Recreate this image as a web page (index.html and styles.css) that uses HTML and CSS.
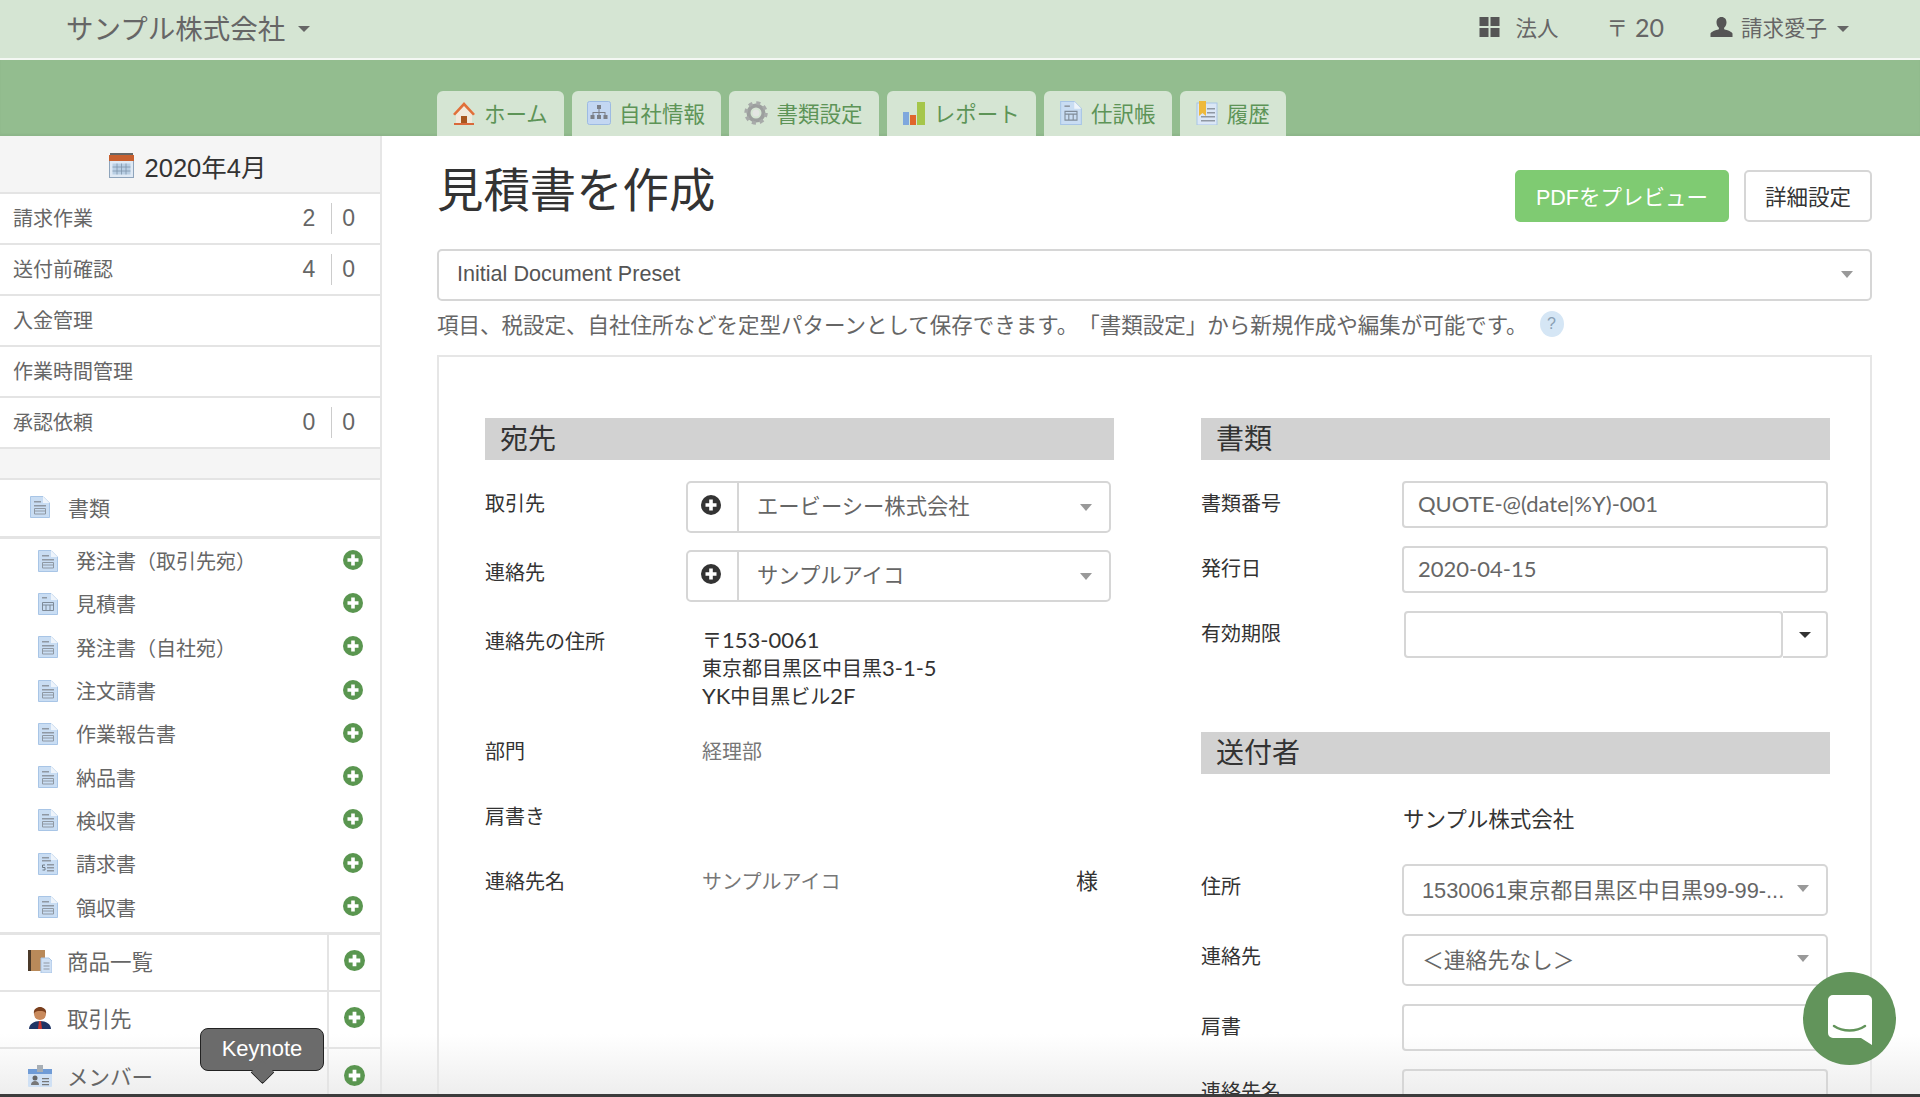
FILE: index.html
```html
<!DOCTYPE html>
<html lang="ja">
<head>
    <meta charset="UTF-8">
    <meta name="viewport" content="width=device-width, initial-scale=1.0">
    <title>見積書を作成</title>
    <link rel="stylesheet" href="styles.css">
</head>
<body>

    <svg class="sprites" width="0" height="0">
        <symbol id="i-doc" viewBox="0 0 20 22">
            <path d="M.5.500h12.500l6.500 6.500v14.500H.5z" fill="#c9ddf3" stroke="#a8c5e6"/>
            <path d="M13 .5v6.500h6.500z" fill="#eef4fb"/>
            <path d="M4 5h7v1.500H4zM4 9h12v1.500H4z" fill="#8f98a3"/>
            <path d="M4.500 12.500h11v5.500h-11zM4.500 15h11" fill="none" stroke="#8f98a3"/>
        </symbol>
        <symbol id="i-doc-table" viewBox="0 0 20 22">
            <path d="M.5.500h12.500l6.500 6.500v14.500H.5z" fill="#c9ddf3" stroke="#a8c5e6"/>
            <path d="M13 .5v6.500h6.500z" fill="#eef4fb"/>
            <path d="M4 4h5v1.500H4z" fill="#8f98a3"/>
            <path d="M4.500 9.500h11v8h-11zM4.500 12h11M8 12v5.500M12 12v5.500" fill="none" stroke="#7f8b98"/>
        </symbol>
        <symbol id="i-doc-bill" viewBox="0 0 20 22">
            <path d="M.5.500h12.500l6.500 6.500v14.500H.5z" fill="#c9ddf3" stroke="#a8c5e6"/>
            <path d="M13 .5v6.500h6.500z" fill="#eef4fb"/>
            <path d="M4 4h7v1.500H4zM4 7h9v1.500H4zM9 11h7v1.500H9zM9 14h7v1.500H9zM9 17h7v1.500H9z" fill="#8f98a3"/>
            <path d="M7 12H4.500v2.500H7V17H4.500" fill="none" stroke="#6f7a85"/>
        </symbol>
        <symbol id="i-plus" viewBox="0 0 20 20">
            <circle cx="10" cy="10" r="10" fill="currentColor"/>
            <path d="M8.200 4.500h3.600v3.700h3.700v3.600h-3.700v3.700H8.200v-3.700H4.500V8.200h3.700z" fill="#fff"/>
        </symbol>
    </svg>

    <div class="bottom-fade"></div>

    <header class="topbar">
        <div class="company">サンプル株式会社<span class="caret"></span></div>
        <div class="topbar-right">
            <span class="top-item">
                <svg class="grid-icon" viewBox="0 0 20 20"><path d="M0 0h9v9H0zM11 0h9v9h-9zM0 11h9v9H0zM11 11h9v9h-9z" fill="#555"/></svg>
                法人
            </span>
            <span class="top-item postal">〒<span class="postal-num">20</span></span>
            <span class="top-item user">
                <svg class="user-icon" viewBox="0 0 23 20"><path d="M11.500 0c3.200 0 5 2.300 5 5.200 0 2.400-1 4.500-2.400 5.500v1.500c3.500 1 8 2.500 8.400 4.300V20H.500v-3.500c.4-1.800 4.900-3.300 8.400-4.300v-1.500c-1.400-1-2.400-3.100-2.400-5.500 0-2.900 1.800-5.200 5-5.200z" fill="#555"/></svg>
                請求愛子<span class="caret small"></span>
            </span>
        </div>
    </header>

    <nav class="tabband">
        <a class="tab">
            <svg class="tab-icon" viewBox="0 0 24 24"><path d="M12 1 1 13h3v10h16V13h3z" fill="#f1e9dc"/><path d="M12 1 1 13l2 1.500L12 5l9 9.500 2-1.500z" fill="#e0703a"/><path d="M9 15h6v8H9z" fill="#a8561f"/><path d="M2 22h20v2H2z" fill="#d9693a"/></svg>
            ホーム
        </a>
        <a class="tab">
            <svg class="tab-icon" viewBox="0 0 24 24"><rect x=".5" y=".5" width="23" height="23" rx="2" fill="#c3d7f2" stroke="#9dbbe3"/><path d="M10 4h4v4h-4zM3.500 14h4v4h-4zM10 14h4v4h-4zM16.500 14h4v4h-4zM11.500 8h1v3h6v3h-1v-2h-5v2h-1v-2h-5v2h-1v-3h6z" fill="#7b7f87"/></svg>
            自社情報
        </a>
        <a class="tab">
            <svg class="tab-icon" viewBox="0 0 24 24"><circle cx="12" cy="12" r="7.500" fill="none" stroke="#9c9f9e" stroke-width="4"/><circle cx="12" cy="12" r="10" fill="none" stroke="#a7aaa9" stroke-width="3.500" stroke-dasharray="4 3.850"/><circle cx="12" cy="12" r="3.500" fill="#e3e5e2"/></svg>
            書類設定
        </a>
        <a class="tab">
            <svg class="tab-icon" viewBox="0 0 24 24"><path d="M1 11h6v13H1z" fill="#7fa8dd"/><path d="M8 14h6v10H8z" fill="#e0662c"/><path d="M15 1h8v23h-8z" fill="#a5c64a"/></svg>
            レポート
        </a>
        <a class="tab">
            <svg class="tab-icon" viewBox="0 0 20 22"><use href="#i-doc-table"/></svg>
            仕訳帳
        </a>
        <a class="tab">
            <svg class="tab-icon" viewBox="0 0 24 24"><rect x="2" y="2" width="20" height="22" fill="#dbe7f6" stroke="#a8c5e6"/><path d="M12 7h8v1.500h-8zM12 11h8v1.500h-8zM6 15h14v1.500H6zM6 19h14v1.500H6z" fill="#8f98a3"/><path d="M4 0h7v15l-3.500-3L4 15z" fill="#eeb93c"/></svg>
            履歴
        </a>
    </nav>

    <div class="layout">
        <aside class="sidebar">
            <div class="month">
                <svg class="month-icon" viewBox="0 0 25 25"><rect x=".5" y="2.500" width="24" height="22" fill="#dfe9f4" stroke="#8ea4bb"/><path d="M0 2h25v6H0z" fill="#c8602f"/><path d="M1 0h23v2H1z" fill="#666"/><path d="M3.500 10.500h18v11h-18z" fill="#b9cfe4"/><path d="M3.500 14h18M3.500 18h18M8 10.500v11M12.500 10.500v11M17 10.500v11" stroke="#7f95ab" stroke-width=".8"/></svg>
                2020年4月
            </div>
            <div class="work-row"><span>請求作業</span><span class="counts"><b>2</b><b>0</b></span></div>
            <div class="work-row"><span>送付前確認</span><span class="counts"><b>4</b><b>0</b></span></div>
            <div class="work-row"><span>入金管理</span></div>
            <div class="work-row"><span>作業時間管理</span></div>
            <div class="work-row"><span>承認依頼</span><span class="counts"><b>0</b><b>0</b></span></div>
            <div class="spacer"></div>
            <div class="doc-head">
                <svg class="doc-icon"><use href="#i-doc"/></svg>
                書類
            </div>
            <ul class="doc-list">
                <li><svg class="doc-icon"><use href="#i-doc"/></svg><span>発注書（取引先宛）</span><svg class="plus"><use href="#i-plus"/></svg></li>
                <li><svg class="doc-icon"><use href="#i-doc-table"/></svg><span>見積書</span><svg class="plus"><use href="#i-plus"/></svg></li>
                <li><svg class="doc-icon"><use href="#i-doc"/></svg><span>発注書（自社宛）</span><svg class="plus"><use href="#i-plus"/></svg></li>
                <li><svg class="doc-icon"><use href="#i-doc"/></svg><span>注文請書</span><svg class="plus"><use href="#i-plus"/></svg></li>
                <li><svg class="doc-icon"><use href="#i-doc"/></svg><span>作業報告書</span><svg class="plus"><use href="#i-plus"/></svg></li>
                <li><svg class="doc-icon"><use href="#i-doc"/></svg><span>納品書</span><svg class="plus"><use href="#i-plus"/></svg></li>
                <li><svg class="doc-icon"><use href="#i-doc"/></svg><span>検収書</span><svg class="plus"><use href="#i-plus"/></svg></li>
                <li><svg class="doc-icon"><use href="#i-doc-bill"/></svg><span>請求書</span><svg class="plus"><use href="#i-plus"/></svg></li>
                <li><svg class="doc-icon"><use href="#i-doc"/></svg><span>領収書</span><svg class="plus"><use href="#i-plus"/></svg></li>
            </ul>
            <div class="link-row">
                <span class="link-main">
                    <svg class="link-icon" viewBox="0 0 24 24"><path d="M0 1h17v21H0z" fill="#b98a5a"/><path d="M0 1h3v21H0z" fill="#4b3a2a"/><path d="M13 9h8l3 3v12H13z" fill="#cfe0f4" stroke="#a8c5e6"/><path d="M15.500 14h6M15.500 17h6M15.500 20h6" stroke="#8f98a3"/></svg>
                    商品一覧
                </span>
                <span class="link-add"><svg class="plus big"><use href="#i-plus"/></svg></span>
            </div>
            <div class="link-row">
                <span class="link-main">
                    <svg class="link-icon" viewBox="0 0 24 24"><path d="M1 23c0-5 5-8 11-8s11 3 11 8z" fill="#1f3566"/><path d="M11 15h2l1 8h-4z" fill="#c8352f"/><circle cx="12" cy="8" r="6" fill="#c98a5c"/><path d="M6 8c-1-5 3-7 6-7s7 2 6 7c-1-3-3-3-6-3s-5 0-6 3z" fill="#7a3f1d"/></svg>
                    取引先
                </span>
                <span class="link-add"><svg class="plus big"><use href="#i-plus"/></svg></span>
            </div>
            <div class="link-row last">
                <span class="link-main">
                    <svg class="link-icon" viewBox="0 0 24 24"><rect x="0" y="5" width="24" height="18" rx="1" fill="#cfe0f4"/><path d="M0 5h24v5H0z" fill="#6f9bd6"/><path d="M9 1h6v7H9z" fill="#a7aeb5"/><circle cx="7" cy="14" r="2.500" fill="#666"/><path d="M3 21c0-3 2-4 4-4s4 1 4 4zM14 14h7v1.200h-7zM14 17h7v1.200h-7zM14 20h7v1.200h-7z" fill="#777"/></svg>
                    メンバー
                </span>
                <span class="link-add"><svg class="plus big"><use href="#i-plus"/></svg></span>
            </div>
        </aside>

        <main class="content">
            <div class="title-row">
                <h1>見積書を作成</h1>
                <div class="actions">
                    <button class="btn btn-green">PDFをプレビュー</button>
                    <button class="btn">詳細設定</button>
                </div>
            </div>
            <div class="preset"><span>Initial Document Preset</span><span class="arrow"></span></div>
            <p class="help">項目、税設定、自社住所などを定型パターンとして保存できます。「書類設定」から新規作成や編集が可能です。<span class="help-badge">?</span></p>

            <div class="card">
                <section class="col">
                    <h2>宛先</h2>
                    <div class="form-row">
                        <label>取引先</label>
                        <div class="combo">
                            <span class="combo-add"><svg class="plus dark"><use href="#i-plus"/></svg></span>
                            <span class="combo-value">エービーシー株式会社</span>
                            <span class="arrow"></span>
                        </div>
                    </div>
                    <div class="form-row tight">
                        <label>連絡先</label>
                        <div class="combo">
                            <span class="combo-add"><svg class="plus dark"><use href="#i-plus"/></svg></span>
                            <span class="combo-value">サンプルアイコ</span>
                            <span class="arrow"></span>
                        </div>
                    </div>
                    <div class="form-row address">
                        <label class="plain">連絡先の住所</label>
                        <div class="value-dark">〒<span class="latin">153-0061</span><br>東京都目黒区中目黒<span class="latin">3-1-5</span><br><span class="latin">YK</span>中目黒ビル<span class="latin">2F</span></div>
                    </div>
                    <div class="form-row dept">
                        <label class="plain">部門</label>
                        <div class="value-gray">経理部</div>
                    </div>
                    <div class="form-row info">
                        <label class="plain">肩書き</label>
                        <div></div>
                    </div>
                    <div class="form-row info">
                        <label class="plain">連絡先名</label>
                        <div class="value-gray name-line"><span>サンプルアイコ</span><span class="honorific">様</span></div>
                    </div>
                </section>

                <section class="col">
                    <h2>書類</h2>
                    <div class="form-row">
                        <label>書類番号</label>
                        <div class="field latin-field">QUOTE-@(date|%Y)-001</div>
                    </div>
                    <div class="form-row gap18">
                        <label>発行日</label>
                        <div class="field latin-field">2020-04-15</div>
                    </div>
                    <div class="form-row gap18">
                        <label>有効期限</label>
                        <div class="date-group">
                            <div class="field"></div>
                            <span class="date-btn"><span class="caret black"></span></span>
                        </div>
                    </div>

                    <h2 class="sender">送付者</h2>
                    <div class="form-row company-row">
                        <label class="plain"></label>
                        <div class="value-dark">サンプル株式会社</div>
                    </div>
                    <div class="form-row addr-row">
                        <label>住所</label>
                        <div class="select-box"><span class="select-text">1530061東京都目黒区中目黒99-99-...</span><span class="arrow"></span></div>
                    </div>
                    <div class="form-row gap18">
                        <label>連絡先</label>
                        <div class="select-box"><span class="select-text">＜連絡先なし＞</span><span class="arrow"></span></div>
                    </div>
                    <div class="form-row gap18">
                        <label>肩書</label>
                        <div class="field"></div>
                    </div>
                    <div class="form-row gap18">
                        <label>連絡先名</label>
                        <div class="field"></div>
                    </div>
                </section>
            </div>
        </main>
    </div>

    <div class="dock-line"></div>

    <div class="dock-tip">Keynote</div>

    <div class="chat-bubble">
        <svg viewBox="0 0 44 50" class="chat-icon">
            <path d="M5 0h34a5 5 0 0 1 5 5v45L33 43H5a5 5 0 0 1-5-5V5a5 5 0 0 1 5-5z" fill="#fff"/>
            <path d="M6 31c9 6 22 6 31 0" fill="none" stroke="#62945b" stroke-width="2.500" stroke-linecap="round"/>
        </svg>
    </div>

</body>
</html>
```

FILE: styles.css
```css
* { box-sizing: border-box; }

html, body {
    margin: 0;
    height: 100%;
    overflow: hidden;
}
body {
    position: relative;
    height: 100vh;
    background: #fff;
    font-family: "Liberation Sans", "Noto Sans CJK JP", sans-serif;
    font-size: 20px;
    color: #333;
    text-spacing-trim: space-all;
}
.sprites { position: absolute; }
.latin {
    font-family: Lato, "Liberation Sans", sans-serif;
    font-size: 22px;
    line-height: 1;
}

/* top bar */
.topbar {
    position: relative;
    display: flex;
    justify-content: space-between;
    align-items: center;
    height: 60px;
    padding: 0 71px 5px 66px;
    background: #d5e5d3;
    border-bottom: 2px solid #f4f8f3;
}
.company {
    display: flex;
    align-items: center;
    font-size: 27.500px;
    color: #666;
}
.caret {
    display: inline-block;
    width: 0;
    height: 0;
    margin-left: 13px;
    margin-top: 4px;
    border-left: 6px solid transparent;
    border-right: 6px solid transparent;
    border-top: 6px solid #666;
}
.caret.small { margin-left: 2px; }
.caret.black { margin: 0; border-top-color: #333; }
.topbar-right {
    display: flex;
    align-items: center;
    gap: 48px;
}
.top-item {
    display: flex;
    align-items: center;
    gap: 15px;
    font-size: 21.500px;
    color: #666;
}
.top-item.postal { gap: 7px; }
.postal-num {
    font-family: Lato, "Liberation Sans", sans-serif;
    font-size: 25px;
}
.top-item.user { gap: 8px; margin-left: -2px; }
.grid-icon { width: 21px; height: 20px; }
.user-icon { width: 23px; height: 20px; }

/* tabs */
.tabband {
    position: relative;
    display: flex;
    align-items: flex-end;
    gap: 8px;
    height: 76px;
    padding-left: 437px;
    background: #93bd8f;
    box-shadow: inset 0 -2px 2px rgba(0, 0, 0, 0.04);
}
.tab {
    display: flex;
    align-items: center;
    gap: 8px;
    height: 45px;
    padding: 0 16.250px 2px 15px;
    background: #d5e5d3;
    border-radius: 6px 6px 0 0;
    font-size: 21.500px;
    color: #5d9457;
}
.tab-icon { width: 24px; height: 24px; }

.layout {
    position: relative;
    display: flex;
    height: 961px;
}

/* sidebar */
.sidebar {
    flex: none;
    width: 382px;
    border-right: 2px solid #e6e6e6;
    color: #666;
}
.month {
    display: flex;
    justify-content: center;
    align-items: center;
    gap: 11px;
    height: 58px;
    padding-top: 3px;
    padding-right: 5px;
    background: #f5f5f5;
    border-bottom: 2px solid #e4e4e4;
    font-size: 25.500px;
    color: #333;
}
.month-icon { width: 25px; height: 25px; }
.work-row {
    display: flex;
    justify-content: space-between;
    align-items: center;
    height: 51px;
    padding: 0 25px 2px 13px;
    border-bottom: 2px solid #e4e4e4;
    background: #fff;
}
.counts { display: flex; margin-top: 2px; }
.counts b {
    display: block;
    font-weight: normal;
    font-size: 23px;
    line-height: 31px;
    padding: 0 16px 0 0;
}
.counts b + b {
    padding: 0 0 0 10px;
    border-left: 1px solid #ccc;
}
.spacer {
    height: 31px;
    background: #f5f5f5;
    border-bottom: 2px solid #e4e4e4;
}
.doc-head {
    display: flex;
    align-items: center;
    gap: 18px;
    height: 59px;
    padding-left: 30px;
    padding-bottom: 2px;
    border-bottom: 3px solid #e4e4e4;
    font-size: 21px;
}
.doc-icon { flex: none; width: 20px; height: 22px; }
.doc-list {
    list-style: none;
    margin: 0;
    padding: 0 0 4px;
    height: 396px;
    border-bottom: 3px solid #e4e4e4;
}
.doc-list li {
    display: flex;
    align-items: center;
    height: 43.300px;
    padding-left: 38px;
}
.doc-list li span { flex: 1; margin-left: 18px; }
.plus {
    flex: none;
    width: 20px;
    height: 20px;
    margin: -2px 17px 0 0;
    color: #5a9650;
}
.plus.big { width: 21px; height: 21px; margin: 0; }
.plus.dark { margin: 0; color: #333; }
.link-row {
    display: flex;
    height: 57px;
    border-bottom: 2px solid #e4e4e4;
}
.link-row.last { border-bottom: none; }
.link-main {
    flex: 1;
    display: flex;
    align-items: center;
    gap: 15px;
    padding: 0 0 4px 28px;
    font-size: 21.500px;
}
.link-icon { width: 24px; height: 24px; }
.link-add {
    display: flex;
    justify-content: center;
    align-items: center;
    flex: none;
    width: 53px;
    padding-bottom: 4px;
    border-left: 2px solid #e4e4e4;
}

/* main column */
.content {
    flex: 1;
    min-width: 0;
    padding: 34px 48px 0 55px;
    overflow: hidden;
}
.title-row {
    display: flex;
    justify-content: space-between;
    align-items: flex-start;
    height: 52px;
}
h1 {
    margin: -5px 0 0;
    font-size: 46.400px;
    font-weight: normal;
    line-height: 52px;
    color: #333;
}
.actions { display: flex; gap: 15px; }
.btn {
    height: 52px;
    padding: 0 19px 2px;
    font: inherit;
    font-size: 21.500px;
    color: #333;
    background: #fff;
    border: 2px solid #d6d6d6;
    border-radius: 5px;
}
.btn-green {
    color: #fff;
    background: #7fcb72;
    border-color: #7fcb72;
}
.preset {
    display: flex;
    justify-content: space-between;
    align-items: center;
    height: 52px;
    margin-top: 27px;
    padding: 0 17px 2px 18px;
    border: 2px solid #d6d6d6;
    border-radius: 5px;
    font-size: 21.600px;
    color: #555;
}
.arrow {
    flex: none;
    width: 0;
    height: 0;
    border-left: 6px solid transparent;
    border-right: 6px solid transparent;
    border-top: 7px solid #999;
}
.help {
    display: flex;
    align-items: center;
    height: 30px;
    margin: 7px 0 1px;
    font-size: 21.500px;
    color: #666;
}
.help-badge {
    flex: none;
    width: 24px;
    height: 26px;
    margin-left: 12px;
    margin-top: 2px;
    border-radius: 50%;
    background: #d5e6f5;
    font-size: 16px;
    line-height: 26px;
    text-align: center;
    color: #8aa0b3;
}

/* form card */
.card {
    display: flex;
    gap: 87px;
    height: 800px;
    margin-top: 17px;
    padding: 61px 40px 0 46px;
    border: 2px solid #e6e6e6;
}
.col { flex: 1; min-width: 0; }
h2 {
    height: 42px;
    margin: 0 0 21px;
    padding-left: 15px;
    background: #d2d2d2;
    font-size: 28px;
    font-weight: normal;
    line-height: 44px;
    color: #333;
}
h2.sender { margin-top: 74px; margin-bottom: 32px; }
.form-row {
    display: grid;
    grid-template-columns: 201px minmax(0, 1fr);
    align-items: start;
    width: 627px;
}
.col:first-child .form-row { width: 626px; }
label {
    padding-top: 9px;
    line-height: 28px;
    color: #333;
}
label.plain { padding-top: 0; }
.address label.plain { padding-top: 1px; }
.tight { margin-top: 17px; }
.gap18 { margin-top: 18px; }
.address { margin-top: 25px; }
.dept { margin-top: 27px; }
.info { margin-top: 37px; min-height: 28px; }
.company-row { min-height: 28px; }
.addr-row { margin-top: 30px; }
.value-dark {
    padding-left: 16px;
    line-height: 28px;
    color: #333;
}
.company-row .value-dark { padding-left: 1px; font-size: 21.500px; }
.value-gray {
    padding-left: 16px;
    line-height: 28px;
    color: #777;
}
.name-line {
    display: flex;
    justify-content: space-between;
    padding-right: 13px;
}
.honorific { font-size: 22px; color: #333; }
.combo {
    display: flex;
    align-items: center;
    height: 52px;
    border: 2px solid #d6d6d6;
    border-radius: 5px;
    padding-right: 17px;
}
.combo-add {
    display: flex;
    justify-content: center;
    align-items: center;
    flex: none;
    width: 51px;
    height: 100%;
    padding: 0 4px 4px 0;
    border-right: 2px solid #d6d6d6;
}
.combo-value {
    flex: 1;
    padding: 0 0 6px 18px;
    font-size: 21.300px;
    color: #666;
}
.field {
    height: 47px;
    padding-left: 14px;
    border: 2px solid #d6d6d6;
    border-radius: 4px;
    line-height: 42px;
    color: #666;
}
.latin-field {
    font-family: Lato, "Liberation Sans", sans-serif;
    font-size: 22px;
}
.date-group {
    display: flex;
    margin-left: 2px;
}
.date-group .field { flex: 1; }
.date-btn {
    display: flex;
    justify-content: center;
    align-items: center;
    flex: none;
    width: 45px;
    height: 47px;
    border: 2px solid #d6d6d6;
    border-left: none;
    border-radius: 0 4px 4px 0;
}
.select-box {
    display: flex;
    align-items: center;
    gap: 8px;
    height: 52px;
    padding: 0 17px 4px 18px;
    border: 2px solid #d6d6d6;
    border-radius: 5px;
    font-size: 21.800px;
    color: #666;
}
.select-text {
    flex: 1;
    min-width: 0;
    overflow: hidden;
    white-space: nowrap;
}

/* overlays */
.bottom-fade {
    position: absolute;
    left: 0;
    right: 0;
    bottom: 3px;
    height: 60px;
    background: linear-gradient(rgba(238, 238, 238, 0), #eee);
}
.dock-line {
    position: absolute;
    left: 0;
    right: 0;
    bottom: 0;
    height: 3px;
    background: #3c3c3c;
}
.dock-tip {
    position: absolute;
    left: 200px;
    top: 1028px;
    width: 124px;
    height: 43px;
    background: #6b6b6b;
    border: 1px solid #222;
    border-radius: 8px;
    color: #fff;
    font-size: 22px;
    line-height: 40px;
    text-align: center;
}
.dock-tip::after {
    content: "";
    position: absolute;
    left: 50%;
    bottom: -11px;
    width: 16px;
    height: 16px;
    margin-left: -8px;
    background: #6b6b6b;
    border-right: 1px solid #222;
    border-bottom: 1px solid #222;
    transform: rotate(45deg);
    border-radius: 0 0 3px 0;
}
.chat-bubble {
    position: absolute;
    left: 1803px;
    top: 972px;
    display: flex;
    justify-content: center;
    align-items: center;
    width: 93px;
    height: 93px;
    border-radius: 50%;
    background: #62945b;
}
.chat-icon { width: 44px; height: 50px; margin-top: 2px; }
```
